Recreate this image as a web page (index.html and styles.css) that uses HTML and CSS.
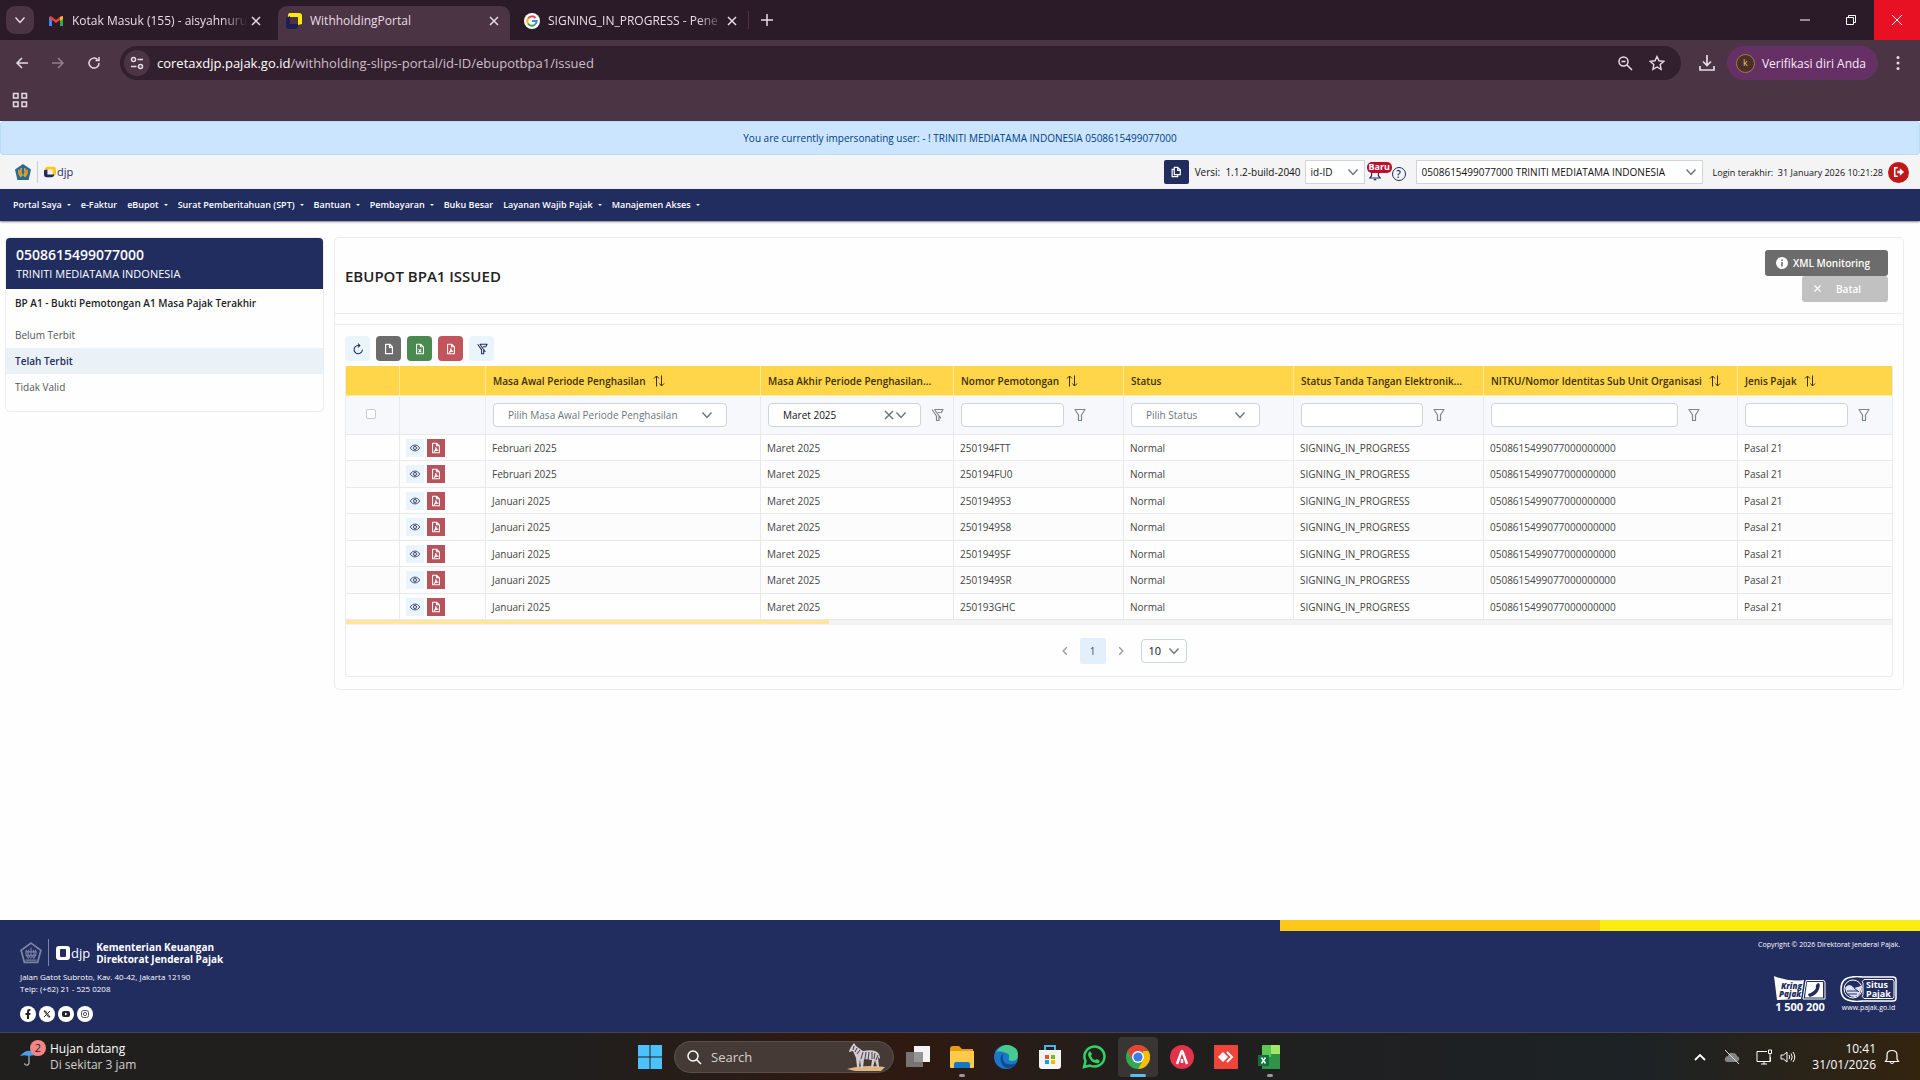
FILE: index.html
```
<!DOCTYPE html>
<html lang="id">
<head>
    <meta charset="UTF-8">
    <title>WithholdingPortal</title>
    <link rel="stylesheet" href="styles.css">
</head>
<body>
    <svg class="sprite" aria-hidden="true">
        <symbol id="i-chevron" viewBox="0 0 12 12"><path d="M1.500 3.500 6 8.500l4.500-5" fill="none" stroke="currentColor" stroke-width="1.400"/></symbol>
        <symbol id="i-close" viewBox="0 0 12 12"><path d="M2 2l8 8M10 2l-8 8" fill="none" stroke="currentColor" stroke-width="1.500"/></symbol>
        <symbol id="i-sort" viewBox="0 0 12 12"><path d="M3.500 11.500V1M1 3.500 3.500 1 6 3.500M8.500.5V11M6.500 8.500 8.500 11 11 8.500" fill="none" stroke="currentColor"/></symbol>
        <symbol id="i-funnel" viewBox="0 0 14 14"><path d="M2 1.500h10L8.500 7v5.500h-3V7z" fill="none" stroke="currentColor" stroke-width="1.200" stroke-linejoin="round"/></symbol>
        <symbol id="i-funnel-slash" viewBox="0 0 14 14"><path d="M4.500 1.500H13L11 5M9 8v4.500H6.500V8L2 1.500M4.500 1.500l6.500 9M8 4.500h2.500" fill="none" stroke="currentColor" stroke-width="1.200" stroke-linejoin="round"/></symbol>
        <symbol id="i-file" viewBox="0 0 14 14"><path d="M3 1.500h5l3 3v8H3zM7.500 1.500v3.500h3.500" fill="none" stroke="currentColor" stroke-width="1.400" stroke-linejoin="round"/></symbol>
        <symbol id="i-excel" viewBox="0 0 14 14"><path d="M3 1.500h5l3 3v8H3zM7.500 1.500v3h3.500M5.200 7l3.300 4M8.500 7l-3.300 4" fill="none" stroke="currentColor" stroke-width="1.200" stroke-linejoin="round"/></symbol>
        <symbol id="i-pdf" viewBox="0 0 14 14"><path d="M3 1.500h5l3 3v8H3zM7.500 1.500v3h3.500M5 11c1.200-1 2-3 1.800-4.500.3 2 1.200 3 2.500 3.200-1.700-.2-3.300.3-4.300 1.300z" fill="none" stroke="currentColor" stroke-width="1.200" stroke-linejoin="round"/></symbol>
        <symbol id="i-eye" viewBox="0 0 14 14"><path d="M1.500 7c2.500-4.500 8.500-4.500 11 0-2.500 4.500-8.500 4.500-11 0z" fill="none" stroke="currentColor"/><circle cx="7" cy="7" r="1.800" fill="none" stroke="currentColor"/></symbol>
        <symbol id="i-djp" viewBox="0 0 14 14"><path fill-rule="evenodd" d="M3 0h8q3 0 3 3v8q0 3-3 3H3q-3 0-3-3V3q0-3 3-3zm2 3q-1 0-1 1v6q0 1 1 1h4q1 0 1-1V4q0-1-1-1z" fill="currentColor"/></symbol>
        <symbol id="i-emblem" viewBox="0 0 20 20"><path d="M10 1l9 6.500L16 18.500H4L1 7.500z" fill="none" stroke="currentColor" stroke-width="1.600"/><path d="M6 7q-2 4 2 8M14 7q2 4-2 8M10 5v10M8 7q-2 4 1 7M12 7q2 4-1 7M5 16.500h10M5 9h10M5 12h10" fill="none" stroke="currentColor"/></symbol>
    </svg>

    <!-- browser window -->
    <header class="browser">
        <div class="tabs">
            <button class="tab-search" aria-label="Search tabs"><svg><use href="#i-chevron"/></svg></button>
            <div class="tab">
                <svg class="favicon" viewBox="0 0 16 16"><path d="M1 13V4l2-1 5 4 5-4 2 1v9h-3V7L8 10 4 7v6z" fill="#ea4335"/><path d="M1 5l3 2v6H1z" fill="#4285f4"/><path d="M15 5l-3 2v6h3z" fill="#34a853"/><path d="M12 4l3-1v3l-3 2z" fill="#fbbc04"/></svg>
                <span class="tab-title fade">Kotak Masuk (155) - aisyahnuru</span>
                <button class="tab-close" aria-label="Close tab"><svg><use href="#i-close"/></svg></button>
            </div>
            <div class="tab active">
                <svg class="favicon" viewBox="0 0 16 16"><path d="M3 0h10q3 0 3 3v8l-4 1V4H4L2 8V2z" fill="#fde910"/><path d="M0 5l4-2v8h8v3q-1 2-4 2H3q-3 0-3-3z" fill="#221d52"/></svg>
                <span class="tab-title">WithholdingPortal</span>
                <button class="tab-close" aria-label="Close tab"><svg><use href="#i-close"/></svg></button>
            </div>
            <div class="tab">
                <svg class="favicon" viewBox="0 0 16 16"><circle cx="8" cy="8" r="8" fill="#fff"/><g fill="none" stroke-width="2"><path d="M4 5.500A4.700 4.700 0 0 1 11.500 5" stroke="#ea4335"/><path d="M4 10.500a4.700 4.700 0 0 1 0-5" stroke="#fbbc05"/><path d="M11 11.600A4.700 4.700 0 0 1 4 10.500" stroke="#34a853"/><path d="M8 8h4.700a4.700 4.700 0 0 1-1.700 3.600" stroke="#4285f4"/></g></svg>
                <span class="tab-title fade">SIGNING_IN_PROGRESS - Pene</span>
                <button class="tab-close" aria-label="Close tab"><svg><use href="#i-close"/></svg></button>
            </div>
            <button class="new-tab" aria-label="New tab"><svg viewBox="0 0 12 12"><path d="M6 0v12M0 6h12" stroke="currentColor" stroke-width="1.500"/></svg></button>
            <div class="window-buttons">
                <button aria-label="Minimize"><svg viewBox="0 0 12 12"><path d="M1 6h10" stroke="currentColor"/></svg></button>
                <button aria-label="Restore"><svg viewBox="0 0 12 12"><path d="M1.500 3.500h7v7h-7zM3.500 3.500v-2h7v7h-2" fill="none" stroke="currentColor"/></svg></button>
                <button class="close" aria-label="Close"><svg viewBox="0 0 12 12"><path d="M1 1l10 10M11 1L1 11" stroke="currentColor"/></svg></button>
            </div>
        </div>
        <div class="address-row">
            <button aria-label="Back"><svg viewBox="0 0 16 16"><path d="M14 8H3M8 3L3 8l5 5" fill="none" stroke="currentColor" stroke-width="1.500"/></svg></button>
            <button class="disabled" aria-label="Forward"><svg viewBox="0 0 16 16"><path d="M2 8h11M8 3l5 5-5 5" fill="none" stroke="currentColor" stroke-width="1.500"/></svg></button>
            <button aria-label="Reload"><svg viewBox="0 0 16 16"><path d="M13 8A5 5 0 1 1 11.500 4.500M13 2v3.500H9.500" fill="none" stroke="currentColor" stroke-width="1.500"/></svg></button>
            <div class="omnibox">
                <span class="site-info"><svg viewBox="0 0 14 14"><g fill="none" stroke="currentColor" stroke-width="1.500"><circle cx="3.500" cy="3.500" r="2"/><path d="M7.500 3.500H13M1 10.500h5.500"/><circle cx="10.500" cy="10.500" r="2"/></g></svg></span>
                <span class="url"><b>coretaxdjp.pajak.go.id</b>/withholding-slips-portal/id-ID/ebupotbpa1/issued</span>
                <svg viewBox="0 0 16 16"><g fill="none" stroke="currentColor" stroke-width="1.500"><circle cx="6.500" cy="6.500" r="4.500"/><path d="M10 10l5 5M4.500 6.500h4"/></g></svg>
                <svg viewBox="0 0 16 16"><path d="M8 1.500l2 4.300 4.700.6-3.500 3.200.9 4.700L8 12l-4.100 2.300.9-4.700L1.300 6.400 6 5.800z" fill="none" stroke="currentColor" stroke-width="1.400"/></svg>
            </div>
            <button aria-label="Downloads"><svg viewBox="0 0 16 16"><path d="M8 0v10M4 6.500L8 10.500l4-4M1 11v4h14v-4" fill="none" stroke="currentColor" stroke-width="1.700"/></svg></button>
            <button class="profile"><span class="avatar">k</span>Verifikasi diri Anda</button>
            <button aria-label="Menu"><svg viewBox="0 0 16 16"><g fill="currentColor"><circle cx="8" cy="2.500" r="1.500"/><circle cx="8" cy="8" r="1.500"/><circle cx="8" cy="13.500" r="1.500"/></g></svg></button>
        </div>
        <div class="bookmarks">
            <button aria-label="Apps"><svg viewBox="0 0 16 16"><path d="M1.500 1.500h4.500v4.500H1.500zM10 1.500h4.500v4.500H10zM1.500 10h4.500v4.500H1.500zM10 10h4.500v4.500H10z" fill="none" stroke="currentColor" stroke-width="1.500"/></svg></button>
        </div>
    </header>

    <div class="impersonate">You are currently impersonating user: - ! TRINITI MEDIATAMA INDONESIA 0508615499077000</div>

    <div class="topbar">
        <a class="brand" href="#">
            <svg class="emblem" viewBox="0 0 20 20"><path d="M10 0l10 7-3 13H3L0 7z" fill="#2a6797"/><path d="M5 7q-1 6 3 9M15 7q1 6-3 9M8 5q-2 5 1 10M12 5q2 5-1 10" fill="none" stroke="#e0a526" stroke-width="2"/></svg>
            <span class="brand-line"></span>
            <svg class="djp-mark" viewBox="0 0 14 14"><path d="M3 1h8q3 0 3 3v6l-4 1V4H4L1 6V3z" fill="#fdc81a"/><path d="M0 5l4-1v6h8v1q-1 2-3 2H3q-3 0-3-3z" fill="#212c5f"/></svg>
            <span class="djp-text">djp</span>
        </a>
        <div class="topbar-right">
            <button class="copy" aria-label="Copy"><svg viewBox="0 0 14 14"><path d="M5 1.500h4l3 3V10H5zM9 1.500V5h3M5 4H2.500v8.500H9V10" fill="none" stroke="currentColor" stroke-width="1.400"/></svg></button>
            <span class="version">Versi:&nbsp; 1.1.2-build-2040</span>
            <span class="select locale"><select aria-label="Bahasa"><option>id-ID</option></select><svg><use href="#i-chevron"/></svg></span>
            <button class="notif" aria-label="Notifikasi"><svg viewBox="0 0 14 14"><path d="M1 10.500h12L11 8V5q0-3-4-3T3 5v3zM5.500 12.500h3" fill="none" stroke="currentColor" stroke-width="1.400"/></svg><span class="badge">Baru</span></button>
            <button class="help" aria-label="Bantuan">?</button>
            <span class="select account"><select aria-label="Wajib pajak"><option>0508615499077000 TRINITI MEDIATAMA INDONESIA</option></select><svg><use href="#i-chevron"/></svg></span>
            <span class="last-login">Login terakhir: &nbsp;<b>31 January 2026 10:21:28</b></span>
            <button class="logout" aria-label="Keluar"><svg viewBox="0 0 14 14"><path d="M5.500 2H2v10h3.500" fill="none" stroke="currentColor" stroke-width="1.800"/><path d="M5 5.500h3V2.500L13 7l-5 4.500v-3H5z" fill="currentColor"/></svg></button>
        </div>
    </div>

    <nav class="menu">
        <a class="drop" href="#">Portal Saya</a>
        <a href="#">e-Faktur</a>
        <a class="drop" href="#">eBupot</a>
        <a class="drop" href="#">Surat Pemberitahuan (SPT)</a>
        <a class="drop" href="#">Bantuan</a>
        <a class="drop" href="#">Pembayaran</a>
        <a href="#">Buku Besar</a>
        <a class="drop" href="#">Layanan Wajib Pajak</a>
        <a class="drop" href="#">Manajemen Akses</a>
    </nav>

    <main class="page">
        <aside class="sidebar">
            <div class="sidebar-head">
                <strong>0508615499077000</strong>
                <span>TRINITI MEDIATAMA INDONESIA</span>
            </div>
            <h2>BP A1 - Bukti Pemotongan A1 Masa Pajak Terakhir</h2>
            <a href="#">Belum Terbit</a>
            <a class="active" href="#">Telah Terbit</a>
            <a href="#">Tidak Valid</a>
        </aside>

        <section class="card">
            <div class="card-head">
                <h1>EBUPOT BPA1 ISSUED</h1>
                <div class="card-actions">
                    <button class="btn-xml"><svg viewBox="0 0 12 12"><circle cx="6" cy="6" r="6" fill="#fff"/><path d="M6 5v4.500M6 2.500V4" stroke="#6c6c6c" stroke-width="1.600"/></svg>XML Monitoring</button>
                    <button class="btn-cancel" disabled><svg><use href="#i-close"/></svg>Batal</button>
                </div>
            </div>
            <div class="card-strip"></div>
            <div class="card-body">
                <div class="tools">
                    <button aria-label="Muat ulang"><svg viewBox="0 0 14 14"><path d="M12 7.500A4.800 4.800 0 1 1 7 3h2M7 .8 9.200 3 7 5.200" fill="none" stroke="currentColor" stroke-width="1.200"/></svg></button>
                    <button class="gray" aria-label="CSV"><svg><use href="#i-file"/></svg></button>
                    <button class="green" aria-label="Excel"><svg><use href="#i-excel"/></svg></button>
                    <button class="red" aria-label="PDF"><svg><use href="#i-pdf"/></svg></button>
                    <button aria-label="Hapus filter"><svg><use href="#i-funnel-slash"/></svg></button>
                </div>
                <div class="grid-box">
                    <table>
                        <colgroup>
                            <col class="c-check"><col class="c-act"><col class="c-start"><col class="c-end"><col class="c-num"><col class="c-status"><col class="c-sign"><col class="c-nitku"><col>
                        </colgroup>
                        <thead>
                            <tr class="titles">
                                <th></th>
                                <th></th>
                                <th>Masa Awal Periode Penghasilan<svg><use href="#i-sort"/></svg></th>
                                <th>Masa Akhir Periode Penghasilan...</th>
                                <th>Nomor Pemotongan<svg><use href="#i-sort"/></svg></th>
                                <th>Status</th>
                                <th>Status Tanda Tangan Elektronik...</th>
                                <th>NITKU/Nomor Identitas Sub Unit Organisasi<svg><use href="#i-sort"/></svg></th>
                                <th>Jenis Pajak<svg><use href="#i-sort"/></svg></th>
                            </tr>
                            <tr class="filters">
                                <td class="center"><input type="checkbox" aria-label="Pilih semua"></td>
                                <td></td>
                                <td><span class="select f-start"><select aria-label="Masa Awal"><option>Pilih Masa Awal Periode Penghasilan</option></select><svg><use href="#i-chevron"/></svg></span></td>
                                <td><div class="filter"><span class="select f-end"><select aria-label="Masa Akhir"><option>Maret 2025</option></select><svg class="clear"><use href="#i-close"/></svg><svg><use href="#i-chevron"/></svg></span><svg class="funnel"><use href="#i-funnel-slash"/></svg></div></td>
                                <td><div class="filter"><input class="f-num" type="text" aria-label="Nomor Pemotongan"><svg class="funnel"><use href="#i-funnel"/></svg></div></td>
                                <td><span class="select f-status"><select aria-label="Status"><option>Pilih Status</option></select><svg><use href="#i-chevron"/></svg></span></td>
                                <td><div class="filter"><input class="f-sign" type="text" aria-label="Status Tanda Tangan"><svg class="funnel"><use href="#i-funnel"/></svg></div></td>
                                <td><div class="filter"><input class="f-nitku" type="text" aria-label="NITKU"><svg class="funnel"><use href="#i-funnel"/></svg></div></td>
                                <td><div class="filter"><input class="f-type" type="text" aria-label="Jenis Pajak"><svg class="funnel"><use href="#i-funnel"/></svg></div></td>
                            </tr>
                        </thead>
                        <tbody>
                            <tr>
                                <td></td>
                                <td><div class="acts"><button class="view" aria-label="Lihat"><svg><use href="#i-eye"/></svg></button><button class="pdf" aria-label="PDF"><svg><use href="#i-pdf"/></svg></button></div></td>
                                <td>Februari 2025</td><td>Maret 2025</td><td>250194FTT</td><td>Normal</td><td>SIGNING_IN_PROGRESS</td><td>0508615499077000000000</td><td>Pasal 21</td>
                            </tr>
                            <tr>
                                <td></td>
                                <td><div class="acts"><button class="view" aria-label="Lihat"><svg><use href="#i-eye"/></svg></button><button class="pdf" aria-label="PDF"><svg><use href="#i-pdf"/></svg></button></div></td>
                                <td>Februari 2025</td><td>Maret 2025</td><td>250194FU0</td><td>Normal</td><td>SIGNING_IN_PROGRESS</td><td>0508615499077000000000</td><td>Pasal 21</td>
                            </tr>
                            <tr>
                                <td></td>
                                <td><div class="acts"><button class="view" aria-label="Lihat"><svg><use href="#i-eye"/></svg></button><button class="pdf" aria-label="PDF"><svg><use href="#i-pdf"/></svg></button></div></td>
                                <td>Januari 2025</td><td>Maret 2025</td><td>2501949S3</td><td>Normal</td><td>SIGNING_IN_PROGRESS</td><td>0508615499077000000000</td><td>Pasal 21</td>
                            </tr>
                            <tr>
                                <td></td>
                                <td><div class="acts"><button class="view" aria-label="Lihat"><svg><use href="#i-eye"/></svg></button><button class="pdf" aria-label="PDF"><svg><use href="#i-pdf"/></svg></button></div></td>
                                <td>Januari 2025</td><td>Maret 2025</td><td>2501949S8</td><td>Normal</td><td>SIGNING_IN_PROGRESS</td><td>0508615499077000000000</td><td>Pasal 21</td>
                            </tr>
                            <tr>
                                <td></td>
                                <td><div class="acts"><button class="view" aria-label="Lihat"><svg><use href="#i-eye"/></svg></button><button class="pdf" aria-label="PDF"><svg><use href="#i-pdf"/></svg></button></div></td>
                                <td>Januari 2025</td><td>Maret 2025</td><td>2501949SF</td><td>Normal</td><td>SIGNING_IN_PROGRESS</td><td>0508615499077000000000</td><td>Pasal 21</td>
                            </tr>
                            <tr>
                                <td></td>
                                <td><div class="acts"><button class="view" aria-label="Lihat"><svg><use href="#i-eye"/></svg></button><button class="pdf" aria-label="PDF"><svg><use href="#i-pdf"/></svg></button></div></td>
                                <td>Januari 2025</td><td>Maret 2025</td><td>2501949SR</td><td>Normal</td><td>SIGNING_IN_PROGRESS</td><td>0508615499077000000000</td><td>Pasal 21</td>
                            </tr>
                            <tr>
                                <td></td>
                                <td><div class="acts"><button class="view" aria-label="Lihat"><svg><use href="#i-eye"/></svg></button><button class="pdf" aria-label="PDF"><svg><use href="#i-pdf"/></svg></button></div></td>
                                <td>Januari 2025</td><td>Maret 2025</td><td>250193GHC</td><td>Normal</td><td>SIGNING_IN_PROGRESS</td><td>0508615499077000000000</td><td>Pasal 21</td>
                            </tr>
                        </tbody>
                    </table>
                    <div class="scroll"><div class="thumb"></div></div>
                    <div class="pager">
                        <button aria-label="Sebelumnya"><svg viewBox="0 0 8 8"><path d="M5.500 1L2.500 4l3 3" fill="none" stroke="currentColor"/></svg></button>
                        <button class="current">1</button>
                        <button aria-label="Berikutnya"><svg viewBox="0 0 8 8"><path d="M2.500 1l3 3-3 3" fill="none" stroke="currentColor"/></svg></button>
                        <span class="select rows"><select aria-label="Baris per halaman"><option>10</option></select><svg><use href="#i-chevron"/></svg></span>
                    </div>
                </div>
            </div>
        </section>
    </main>

    <footer class="footer">
        <div class="stripe"><span class="amber"></span><span class="yellow"></span></div>
        <div class="footer-left">
            <div class="footer-brand">
                <svg class="f-emblem"><use href="#i-emblem"/></svg>
                <span class="footer-line"></span>
                <svg class="f-mark"><use href="#i-djp"/></svg>
                <span class="f-djp">djp</span>
                <span class="ministry">Kementerian Keuangan<br>Direktorat Jenderal Pajak</span>
            </div>
            <p>Jalan Gatot Subroto, Kav. 40-42, Jakarta 12190<br>Telp: (+62) 21 - 525 0208</p>
            <div class="social">
                <a href="#" aria-label="Facebook"><svg viewBox="0 0 16 16"><path d="M7 13V9H5.500V7H7V5.500q0-3 3.500-2.300v1.600Q9 4.500 9 6v1h1.500l-.3 2H9v4z" fill="#222"/></svg></a>
                <a href="#" aria-label="X"><svg viewBox="0 0 16 16"><path d="M5 5h1.500l4.500 6H9.500zM11 5L8.500 7.500M5 11l2.500-2.500" fill="none" stroke="#222"/></svg></a>
                <a href="#" aria-label="YouTube"><svg viewBox="0 0 16 16"><rect x="4" y="5" width="8" height="6" rx="2" fill="#222"/><path d="M7 6.500v3l2.500-1.500z" fill="#fff"/></svg></a>
                <a href="#" aria-label="Instagram"><svg viewBox="0 0 16 16"><g fill="none" stroke="#555"><rect x="4.500" y="4.500" width="7" height="7" rx="2"/><circle cx="8" cy="8" r="1.600"/></g></svg></a>
            </div>
        </div>
        <div class="footer-right">
            <span class="copyright">Copyright © 2026 Direktorat Jenderal Pajak.</span>
            <div class="contact">
                <div class="kring">
                    <svg viewBox="0 0 52 24"><path d="M0 0q14 6 30 4l-3 19-24 1z" fill="#fff"/><path d="M32 4.500h17q2 0 2 2V23H29z" fill="none" stroke="#fff"/><path d="M33 6h16v15.500H31z" fill="#fff"/><path d="M44 7q3 0 1 6t-9 8q-2-1-2-3 6-2 8-6-1-3 2-5z" fill="#212c5f"/><text x="7" y="13">Kring</text><text x="5" y="21">Pajak</text></svg>
                    <b>1 500 200</b>
                </div>
                <div class="situs">
                    <svg viewBox="0 0 57 26"><path d="M22 1h31q3 0 3 3v18q0 3-3 3H22q-5 1-10 0Q1 24 1 13T12 1q5-1 10 0z" fill="none" stroke="#fff" stroke-width="1.500"/><path d="M24 3.500h28q2 0 2 2v15q0 2-2 2H24q-3-2-1-4v-11q-2-2 1-4z" fill="none" stroke="#fff"/><circle cx="13" cy="13" r="9" fill="none" stroke="#fff"/><path d="M5 12q4-6 9 0l7-2q1 9-6 11-8 0-10-9z" fill="#dce1f5"/><path d="M7 15h11M8 18h9M14 12l5 4" stroke="#212c5f"/><text x="26" y="12">Situs</text><text x="26" y="21">Pajak</text></svg>
                    <span>www.pajak.go.id</span>
                </div>
            </div>
        </div>
    </footer>

    <!-- desktop taskbar -->
    <div class="taskbar">
        <div class="weather">
            <span class="umbrella"><svg viewBox="0 0 20 20"><path d="M0 9Q10-3 20 9L15 8l-5 1-5-1z" fill="#4b9fea"/><path d="M10 9v7q0 3-3 3-2 0-2-2" fill="none" stroke="#98a4ae" stroke-width="1.500"/></svg><i>2</i></span>
            <div>Hujan datang<br><small>Di sekitar 3 jam</small></div>
        </div>
        <div class="dock">
            <button class="app" aria-label="Start"><svg viewBox="0 0 24 24"><path d="M0 0h11.500v11.500H0zM12.500 0H24v11.500H12.500zM0 12.500h11.500V24H0zM12.500 12.500H24V24H12.500z" fill="#4cc2fb"/></svg></button>
            <div class="search">
                <svg viewBox="0 0 16 16"><circle cx="7" cy="7" r="5" fill="none" stroke="#fff" stroke-width="1.500"/><path d="M10.500 10.500L15 15" stroke="#fff" stroke-width="1.500"/></svg>
                <input type="text" aria-label="Search" placeholder="Search">
                <svg class="zebra" viewBox="0 0 42 28"><path d="M0 26q16-5 38-2l-4 4H8z" fill="#e0b982"/><path d="M2 8l2-4 3-4 2 3 7 5q10-2 14 1 3 2 3 7l-2-2 1 10h-2l-2-7-2 7h-2l1-7-8-1-1 9h-2l-1-9-1 8h-2l-1-9-3-7-4 1z" fill="#d4cdd0"/><path d="M7 3l-1 4M10 5l-2 4M13 7l-3 4M16 9l-2 7M19 9l-1 7M22 9l-1 8M25 9v7M28 10l-1 6M31 12l-2 5" stroke="#433c4a"/></svg>
            </div>
            <button class="app" aria-label="Task view"><svg viewBox="0 0 24 24"><path d="M8 1h16v16H8z" fill="#f4f4f4"/><path d="M0 7h17v15H0z" fill="#858585" opacity=".85"/></svg></button>
            <button class="app open" aria-label="File Explorer"><svg viewBox="0 0 24 24"><path d="M0 4q0-3 3-3h6l3 3h11v18H0z" fill="#e69c16"/><path d="M0 6h24v16q0 1-1 1H1q-1 0-1-1z" fill="#fdcb49"/><path d="M4 23v-4q0-2 2-2h12q2 0 2 2v4z" fill="#1478c6"/></svg></button>
            <button class="app" aria-label="Edge"><svg viewBox="0 0 24 24"><circle cx="12" cy="12" r="12" fill="#1b78c9"/><path d="M2 7Q7-1 15 0q9 2 9 10 0 6-6 6-4 0-3-3 1-4-3-5Q5 5 2 7z" fill="#45cb92"/><path d="M10 8q-5 3-3 9t8 6q5-1 7-5-6 3-11 0-4-4-1-10z" fill="#12498c"/></svg></button>
            <button class="app" aria-label="Store"><svg viewBox="0 0 24 24"><path d="M7 6V1h10v5" fill="none" stroke="#42b6ee" stroke-width="2"/><path d="M1 5h22v16q0 3-3 3H4q-3 0-3-3z" fill="#f5f5f5"/><path d="M7 10h4v4H7z" fill="#f25022"/><path d="M13 10h4v4h-4z" fill="#7fba00"/><path d="M7 15h4v4H7z" fill="#00a4ef"/><path d="M13 15h4v4h-4z" fill="#ffb900"/></svg></button>
            <button class="app" aria-label="WhatsApp"><svg viewBox="0 0 24 24"><path d="M2 22l1.500-6A10 10 0 1 1 8 20.500z" fill="none" stroke="#2fd366" stroke-width="2.500"/><path d="M8 6l2 3-1 2q1 3 4 4l2-1 3 2q-1 3-4 2-6-1-8-8 0-3 2-4z" fill="#2fd366"/></svg></button>
            <button class="app current" aria-label="Chrome"><svg viewBox="0 0 24 24"><circle cx="12" cy="12" r="12" fill="#34a853"/><path d="M1.600 6A12 12 0 0 1 22.400 6H12l-5 9z" fill="#ea4335"/><path d="M22.400 6A12 12 0 0 1 12 24l5.200-9L17 6z" fill="#fbbc04"/><circle cx="12" cy="12" r="6" fill="#fff"/><circle cx="12" cy="12" r="4.600" fill="#3b7ded"/></svg></button>
            <button class="app" aria-label="Acrobat"><svg viewBox="0 0 24 24"><circle cx="12" cy="12" r="12" fill="#e2334c"/><path d="M7 19l4-11q1-4 2 0l4 11M12 14v4" fill="none" stroke="#fff" stroke-width="2.500"/></svg></button>
            <button class="app" aria-label="AnyDesk"><svg viewBox="0 0 24 24"><path d="M0 0h24v24H0z" fill="#ef443b"/><path d="M9 7l5 5-5 5-5-5z" fill="#fff"/><path d="M13 7l5 5-5 5" fill="none" stroke="#fff" stroke-width="2"/></svg></button>
            <button class="app open" aria-label="Excel"><svg viewBox="0 0 24 24"><path d="M4 0h18v24H4z" fill="#2f9447"/><path d="M12 0h9q1 0 1 1v8H12z" fill="#a2e866"/><path d="M5 0h8v12H4V1z" fill="#5dc655"/><path d="M0 10h11v11H0z" fill="#10713f"/><path d="M3.500 12.500l4 6M7.500 12.500l-4 6" stroke="#fff" stroke-width="1.500"/></svg></button>
        </div>
        <div class="tray">
            <svg viewBox="0 0 16 16"><path d="M3 11l5-5 5 5" fill="none" stroke="#fff" stroke-width="1.800"/></svg>
            <svg viewBox="0 0 16 16"><path d="M3 13q-3-1-2-4 1-2 3-2 1-4 5-3 3 0 4 3 3 1 2 4l-2 2z" fill="#858585"/><path d="M1 1l14 14" stroke="#ddd"/></svg>
            <div class="system">
                <svg viewBox="0 0 16 16"><path d="M11 2.500H1v10h13.500V8M5 15h6M8 12.500V15M12.500 1h3v3.500h-3zM14 4.500V12" fill="none" stroke="#fff"/></svg>
                <svg viewBox="0 0 16 16"><path d="M1 6h2.500L7 3v10l-3.500-3H1zM9 6q1.500 2 0 4M11 4.500q2.500 3.500 0 7M13 3q3.500 5 0 10" fill="none" stroke="#fff"/></svg>
            </div>
            <div class="system">
                <div class="clock">10:41<br>31/01/2026</div>
                <svg viewBox="0 0 16 16"><path d="M1.500 12.500h13L13 10V6q0-4.500-5-4.500T3 6v4zM6 13q2 3 4 0" fill="none" stroke="#fff" stroke-width="1.200"/></svg>
            </div>
        </div>
    </div>
</body>
</html>
```
FILE: styles.css
```
* {
    box-sizing: border-box;
}

body {
    margin: 0;
    min-height: 100vh;
    display: flex;
    flex-direction: column;
    background-color: #fefefe;
    color: #333;
    font-family: "Segoe UI", "Open Sans", sans-serif;
    font-size: 10px;
}

button {
    display: flex;
    align-items: center;
    justify-content: center;
    border: none;
    padding: 0;
    background: none;
    color: inherit;
    font: inherit;
}

a {
    color: inherit;
    text-decoration: none;
}

svg {
    display: block;
    flex: none;
    width: 12px;
    height: 12px;
}

.sprite {
    position: absolute;
    width: 0;
    height: 0;
}

/* Browser window */
.browser {
    background-color: #4b3545;
    color: #e8dce4;
    font-size: 12px;
}

.browser svg {
    width: 16px;
    height: 16px;
}

.tabs {
    display: flex;
    align-items: center;
    height: 40px;
    padding-left: 6px;
    background-color: #2b1a28;
}

.tab-search {
    width: 28px;
    height: 28px;
    border-radius: 9px;
    background-color: #4b3545;
}

.tabs .tab-search svg,
.tabs .tab-close svg,
.tabs .new-tab svg,
.window-buttons svg {
    width: 12px;
    height: 12px;
}

.tab {
    display: flex;
    align-items: center;
    width: 232px;
    height: 34px;
    padding: 0 10px 5px 8px;
    margin: 6px 0 0 6px;
}

.tab.active {
    border-radius: 9px 9px 0 0;
    background-color: #4b3545;
}

.tab-title {
    flex: 1;
    margin: 0 2px 0 8px;
    overflow: hidden;
    white-space: nowrap;
}

.tab-title.fade {
    -webkit-mask-image: linear-gradient(to right, #000 85%, transparent);
    mask-image: linear-gradient(to right, #000 85%, transparent);
}

.new-tab {
    padding: 3px 12px;
    border-left: 1px solid #4b3545;
}

.window-buttons {
    display: flex;
    margin-left: auto;
}

.window-buttons button {
    width: 46px;
    height: 40px;
    color: #fff;
}

.window-buttons .close {
    background-color: #e81123;
}

.address-row {
    display: flex;
    align-items: center;
    gap: 4px;
    height: 46px;
    padding: 0 6px;
}

.address-row > button {
    width: 32px;
    height: 34px;
}

.disabled {
    opacity: 0.45;
}

.omnibox {
    flex: 1;
    display: flex;
    align-items: center;
    gap: 16px;
    height: 34px;
    margin: 0 6px;
    padding: 0 16px 0 4px;
    border-radius: 17px;
    background-color: #33202e;
}

.site-info {
    display: flex;
    align-items: center;
    justify-content: center;
    width: 26px;
    height: 26px;
    border-radius: 13px;
    background-color: #4b3545;
}

.browser .site-info svg {
    width: 14px;
    height: 14px;
}

.url {
    flex: 1;
    margin-left: -9px;
    font-size: 13px;
    color: #cdbfc8;
}

.url b {
    font-weight: 400;
    color: #fff;
}

.address-row .profile {
    width: auto;
    gap: 7px;
    padding: 0 12px 0 9px;
    border-radius: 17px;
    background-color: #653165;
    color: #fbeafa;
}

.avatar {
    width: 19px;
    height: 19px;
    border: 1px solid #9c7b54;
    border-radius: 10px;
    background-color: #4a3026;
    color: #e3ce68;
    font-size: 9px;
    line-height: 16px;
}

.bookmarks {
    display: flex;
    align-items: center;
    height: 35px;
    padding: 0 12px 8px;
}

.impersonate {
    height: 34px;
    border: 1px solid #b8daff;
    border-radius: 3px;
    background-color: #cce5ff;
    color: #004085;
    line-height: 32px;
    text-align: center;
}

/* Portal header */
.topbar {
    display: flex;
    align-items: center;
    justify-content: space-between;
    height: 34px;
    padding: 0 11px 0 14px;
    background-color: #f4f4f4;
    color: #111;
}

.brand {
    display: flex;
    align-items: center;
}

.brand .emblem {
    width: 18px;
    height: 16px;
}

.brand-line {
    width: 1px;
    height: 22px;
    margin: 0 6px 0 5px;
    background-color: #c8cbd8;
}

.djp-text {
    margin-left: 1px;
    color: #212c5f;
    font-size: 11px;
    line-height: 16px;
}

.topbar-right {
    display: flex;
    align-items: center;
}

.copy {
    width: 25px;
    height: 24px;
    margin-right: 6px;
    border-radius: 2px;
    background-color: #212c5f;
    color: #fff;
}

.select {
    position: relative;
    display: block;
}

.select select,
.filter input {
    width: 100%;
    height: 24px;
    border: 1px solid #ced4da;
    border-radius: 4px;
    background-color: #fff;
    color: #111;
    font: inherit;
}

.select select {
    appearance: none;
    padding: 0 14px;
}

.select svg {
    position: absolute;
    top: 6px;
    right: 14px;
    color: #6c757d;
    pointer-events: none;
}

.topbar .select select {
    padding: 0 5px;
    border-radius: 0;
}

.topbar .select svg {
    right: 6px;
}

.locale {
    width: 60px;
    margin-left: 4px;
}

.notif {
    position: relative;
    width: 20px;
    height: 24px;
    color: #212c5f;
}

.badge {
    position: absolute;
    top: 2px;
    left: 2px;
    height: 11px;
    padding: 0 2px;
    border-radius: 5px;
    background-color: #c00d2d;
    color: #fff;
    font-size: 9px;
    font-weight: 700;
    line-height: 10px;
}

.notif svg {
    margin-top: 6px;
}

.help {
    width: 14px;
    height: 14px;
    margin: 3px 10px 0 7px;
    border: 1px solid #212c5f;
    border-radius: 7px;
    color: #212c5f;
    font-weight: 600;
}

.account {
    width: 287px;
    margin-right: 10px;
}

.last-login {
    font-size: 9px;
}

.last-login b {
    font-weight: 400;
}

.logout {
    width: 21px;
    height: 21px;
    margin-left: 5px;
    border-radius: 50%;
    background-color: #c01818;
    color: #fff;
}

.menu {
    display: flex;
    align-items: center;
    gap: 10px;
    height: 32px;
    padding: 0 13px 2px;
    background-color: #212c5f;
    box-shadow: 0 1px 2px rgba(0,0,0,0.5);
    color: #fff;
    font-size: 9px;
    font-weight: 600;
}

.menu .drop::after {
    content: "";
    display: inline-block;
    margin-left: 5px;
    vertical-align: 2px;
    border: 2px solid transparent;
    border-top-color: #fff;
    border-bottom: none;
}

/* Page */
.page {
    flex: 1;
    display: flex;
    align-items: flex-start;
    gap: 10px;
    padding: 16px 16px 16px 5px;
}

.sidebar {
    width: 319px;
    padding-bottom: 11px;
    border: 1px solid #ececec;
    border-radius: 5px;
    overflow: hidden;
    color: #555;
}

.sidebar-head {
    display: flex;
    flex-direction: column;
    height: 51px;
    padding: 7px 10px;
    background-color: #212c5f;
    color: #fff;
    font-size: 11px;
    line-height: 18px;
}

.sidebar-head strong {
    font-size: 14px;
    font-weight: 600;
    line-height: 20px;
}

.sidebar h2 {
    margin: 0 0 5px;
    padding: 0 9px;
    color: #222;
    font-size: 10px;
    font-weight: 600;
    line-height: 28px;
}

.sidebar a {
    display: block;
    height: 26px;
    padding: 0 9px;
    line-height: 26px;
}

.sidebar a.active {
    background-color: #eaf2f7;
    color: #212c5f;
    font-weight: 600;
}

.card {
    flex: 1;
    min-width: 0;
    padding-bottom: 12px;
    border: 1px solid #ececec;
    border-radius: 5px;
}

.card-head {
    display: flex;
    align-items: center;
    justify-content: space-between;
    height: 76px;
    padding: 0 15px 0 10px;
    border-bottom: 1px solid #ececec;
}

.card h1 {
    margin: 0;
    color: #222;
    font-size: 15px;
    font-weight: 600;
}

.card-actions {
    display: flex;
    flex-direction: column;
    align-items: flex-end;
}

.card-actions button {
    gap: 5px;
    height: 26px;
    padding-right: 7px;
    border-radius: 3px;
    color: #fff;
    font-weight: 600;
}

.btn-xml {
    width: 123px;
    background-color: #6c6c6c;
}

.card-actions .btn-cancel {
    width: 86px;
    gap: 14px;
    padding-right: 16px;
    background-color: #c1c1c1;
}

.btn-cancel svg {
    width: 9px;
    height: 9px;
}

.card-strip {
    height: 11px;
    border-bottom: 1px solid #ececec;
}

.card-body {
    padding: 11px 10px 0;
}

.tools {
    display: flex;
    gap: 6px;
    margin-bottom: 5px;
}

.tools button {
    width: 25px;
    height: 25px;
    border-radius: 4px;
    background-color: #eaf4fb;
    color: #212c5f;
}

.tools .gray {
    background-color: #6c6c6c;
    color: #fff;
}

.tools .green {
    background-color: #4a8a50;
    color: #fff;
}

.tools .red {
    background-color: #c2545b;
    color: #fff;
}

.grid-box {
    border: 1px solid #ececec;
    border-top: none;
    border-radius: 3px;
}

table {
    width: 100%;
    table-layout: fixed;
    border-collapse: separate;
    border-spacing: 0;
}

.c-check { width: 54px; }
.c-act { width: 86px; }
.c-start { width: 275px; }
.c-end { width: 193px; }
.c-num,
.c-status { width: 170px; }
.c-sign { width: 190px; }
.c-nitku { width: 254px; }

th,
td {
    padding: 0 6px;
    border: solid #e9e9e9;
    border-width: 0 1px 1px 0;
    text-align: left;
    white-space: nowrap;
}

th:last-child,
td:last-child {
    border-right: none;
}

.titles th {
    height: 30px;
    padding-left: 7px;
    border-color: #ffe9a0;
    background-color: #ffd54a;
    color: #3b3008;
    font-weight: 600;
}

.titles svg {
    display: inline-block;
    margin-left: 7px;
    vertical-align: -2px;
}

.filters td {
    height: 39px;
    padding-left: 7px;
    background-color: #f7f8fb;
}

.filters .center {
    padding: 0 6px 0 2px;
    text-align: center;
}

.filters input[type="checkbox"] {
    appearance: none;
    width: 10px;
    height: 10px;
    margin: 0;
    border: 1px solid #c6cbd0;
    border-radius: 2px;
    background-color: #fff;
}

.filter {
    display: flex;
    align-items: center;
    gap: 9px;
}

.filter .funnel {
    width: 14px;
    height: 14px;
    color: #7d858c;
}

.select .clear {
    right: 26px;
}

.f-start { width: 234px; }
.f-end { width: 153px; }
.f-status { width: 129px; }
.filter .f-num { width: 103px; }
.filter .f-sign { width: 122px; }
.filter .f-nitku { width: 187px; }
.filter .f-type { width: 103px; }

.f-start select,
.f-status select {
    color: #6c757d;
}

tbody td {
    height: 26px;
    color: #444;
}

tbody tr:nth-child(even) td {
    height: 27px;
    background-color: #fcfcfc;
}

.acts {
    display: flex;
    gap: 3px;
}

.acts button {
    width: 18px;
    height: 18px;
}

.acts .view {
    background-color: #eaf4fb;
    color: #212c5f;
}

.acts .pdf {
    background-color: #b7535a;
    color: #fff;
}

.scroll {
    height: 5px;
    background-color: #f3f3f3;
}

.thumb {
    width: 483px;
    max-width: 100%;
    height: 4px;
    background-color: #ffe5a0;
}

.pager {
    display: flex;
    align-items: center;
    justify-content: center;
    gap: 2px;
    height: 51px;
}

.pager button {
    width: 26px;
    height: 26px;
    color: #999;
}

.pager button svg {
    width: 10px;
    height: 10px;
}

.pager .current {
    border-radius: 2px;
    background-color: #e3f0fc;
    color: #3a4a6a;
}

.rows {
    width: 46px;
    margin-left: 5px;
}

.rows select {
    padding: 0 7px;
    font-size: 11px;
}

.rows svg {
    right: 7px;
}

/* Footer */
.footer {
    position: relative;
    display: flex;
    justify-content: space-between;
    height: 112px;
    padding: 19px 20px 0;
    background-color: #212c5f;
    color: #fff;
    font-size: 8px;
}

.stripe {
    position: absolute;
    top: 0;
    right: 0;
    display: flex;
    width: 33.333%;
    height: 11px;
}

.stripe span {
    flex: 1;
}

.amber { background-color: #fdc81a; }
.yellow { background-color: #faed0f; }

.footer-brand {
    display: flex;
    align-items: center;
}

.f-emblem {
    width: 22px;
    height: 22px;
    color: #7d84a6;
}

.footer-line {
    width: 1px;
    height: 27px;
    margin: 0 7px 0 6px;
    background-color: #7d84a6;
}

.f-mark {
    width: 14px;
    height: 14px;
}

.f-djp {
    margin: 0 6px 0 1px;
    font-size: 13px;
    line-height: 18px;
}

.ministry {
    font-size: 10px;
    font-weight: 700;
    line-height: 12px;
}

.footer p {
    margin: 5px 0 11px;
    line-height: 12px;
}

.social {
    display: flex;
    gap: 3px;
}

.social a {
    border-radius: 8px;
    background-color: #fff;
}

.social svg {
    width: 16px;
    height: 16px;
}

.footer-right {
    display: flex;
    flex-direction: column;
    align-items: flex-end;
    font-size: 7px;
    line-height: 12px;
}

.contact {
    display: flex;
    gap: 14px;
    margin: 25px 3px 0 0;
    text-align: center;
}

.kring svg {
    width: 52px;
    height: 24px;
}

.kring text {
    fill: #212c5f;
    font-size: 8px;
    font-style: italic;
    font-weight: 800;
}

.kring b {
    font-size: 11px;
    line-height: 14px;
}

.situs svg {
    width: 57px;
    height: 26px;
}

.situs text {
    fill: #fff;
    font-size: 9px;
    font-weight: 700;
}

/* Taskbar */
.taskbar {
    display: grid;
    grid-template-columns: 1fr auto 1fr;
    align-items: center;
    height: 48px;
    padding: 0 20px;
    border-top: 1px solid #45444c;
    background: linear-gradient(to right, #211f1e 30%, #30190f 45%, #211f1e 60%, #1c2225 85%, #33240f);
    color: #fff;
    font-size: 12px;
    line-height: 16px;
}

.weather {
    display: flex;
    align-items: center;
    gap: 12px;
}

.umbrella {
    position: relative;
}

.umbrella svg {
    width: 18px;
    height: 20px;
}

.umbrella i {
    position: absolute;
    top: -7px;
    left: 10px;
    width: 16px;
    height: 16px;
    border-radius: 8px;
    background-color: #f58484;
    color: #222;
    font-size: 11px;
    font-style: normal;
    line-height: 16px;
    text-align: center;
}

.weather small {
    color: #cfcfcf;
    font-size: 12px;
}

.dock {
    display: flex;
    align-items: center;
    gap: 4px;
}

.app {
    position: relative;
    width: 40px;
    height: 40px;
    border-radius: 4px;
}

.app svg {
    width: 24px;
    height: 24px;
}

.app.current {
    background-color: #383533;
}

.app.open::after,
.app.current::after {
    content: "";
    position: absolute;
    bottom: 0;
    width: 6px;
    height: 3px;
    border-radius: 2px;
    background-color: #9a9a9a;
}

.app.current::after {
    width: 16px;
    background-color: #5cc0ee;
}

.search {
    display: flex;
    align-items: center;
    gap: 9px;
    width: 220px;
    height: 32px;
    padding: 0 4px 0 11px;
    border: 1px solid #585050;
    border-radius: 16px;
    background-color: #453a36;
}

.search svg {
    width: 16px;
    height: 16px;
}

.search input {
    flex: 1;
    min-width: 0;
    padding: 0;
    border: none;
    background: none;
    color: #fff;
    font: inherit;
    font-size: 13px;
}

.search input::placeholder {
    color: #d5d0ce;
}

.search .zebra {
    width: 42px;
    height: 28px;
}

.tray {
    display: flex;
    align-items: center;
    justify-content: flex-end;
    gap: 16px;
}

.tray svg {
    width: 16px;
    height: 16px;
}

.system {
    display: flex;
    align-items: center;
    gap: 8px;
}

.clock {
    text-align: right;
}
```
